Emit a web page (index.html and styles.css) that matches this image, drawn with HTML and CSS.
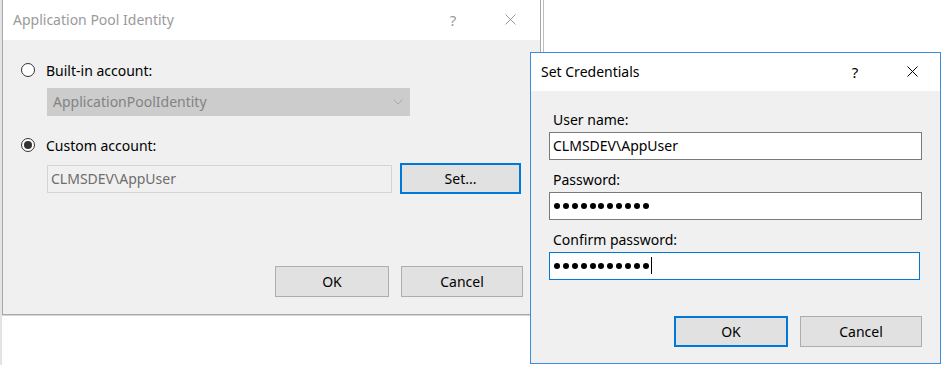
FILE: index.html
```html
<!DOCTYPE html>
<html>
<head>
<meta charset="utf-8">
<title>Application Pool Identity</title>
<link rel="stylesheet" href="styles.css">
</head>
<body>
<div class="desktop">
  <section class="dialog dialog-pool">
    <header class="titlebar inactive">
      <span class="title">Application Pool Identity</span>
      <span class="help">?</span>
      <svg class="close" width="11" height="11" viewBox="0 0 11 11"><path d="M0.5 0.5L10.5 10.5M10.5 0.5L0.5 10.5"/></svg>
    </header>
    <div class="pane pool-pane">
      <div class="radio-row">
        <span class="radio"></span><span class="label">Built-in account:</span>
      </div>
      <div class="combo">
        <span>ApplicationPoolIdentity</span>
        <svg class="chevron" width="10" height="6" viewBox="0 0 10 6"><path d="M0.5 0.5L5 5L9.5 0.5"/></svg>
      </div>
      <div class="radio-row second">
        <span class="radio checked"></span><span class="label">Custom account:</span>
      </div>
      <div class="account-row">
        <div class="textbox disabled">CLMSDEV\AppUser</div>
        <button class="btn default set">Set...</button>
      </div>
      <div class="actions pool-actions">
        <button class="btn ok">OK</button>
        <button class="btn cancel">Cancel</button>
      </div>
    </div>
  </section>

  <section class="dialog dialog-cred">
    <header class="titlebar">
      <span class="title">Set Credentials</span>
      <span class="help">?</span>
      <svg class="close" width="11" height="11" viewBox="0 0 11 11"><path d="M0.5 0.5L10.5 10.5M10.5 0.5L0.5 10.5"/></svg>
    </header>
    <div class="pane cred-pane">
      <div class="field-label first">User name:</div>
      <div class="textbox field">CLMSDEV\AppUser</div>
      <div class="field-label">Password:</div>
      <div class="textbox field dots"><i></i><i></i><i></i><i></i><i></i><i></i><i></i><i></i><i></i><i></i><i></i></div>
      <div class="field-label">Confirm password:</div>
      <div class="textbox field dots focused"><i></i><i></i><i></i><i></i><i></i><i></i><i></i><i></i><i></i><i></i><i></i><span class="caret"></span></div>
      <div class="actions cred-actions">
        <button class="btn default ok">OK</button>
        <button class="btn cancel">Cancel</button>
      </div>
    </div>
  </section>
</div>
</body>
</html>
```

FILE: styles.css
```css
* { box-sizing: border-box; }

html, body {
  margin: 0;
  padding: 0;
  background: #ffffff;
  width: 942px;
  height: 365px;
  overflow: hidden;
}

body {
  font-family: "Noto Sans", "Open Sans", sans-serif;
  font-size: 14px;
  color: #000000;
}

.desktop {
  position: relative;
  width: 942px;
  height: 365px;
  border-left: 2px solid #e4e4e4;
}

.dialog {
  position: absolute;
  display: flex;
  flex-direction: column;
  background: #f0f0f0;
}

.dialog-pool {
  left: 0;
  top: 0;
  width: 539px;
  height: 315px;
  border: 1px solid #a8a8a8;
  border-top: none;
  box-shadow: 2px 0 0 #ffffff, 3px 0 0 #bdbdbd, 0 1px 0 #d6d6d6;
}

.dialog-cred {
  left: 528px;
  top: 52px;
  width: 411px;
  height: 312px;
  border: 1px solid #3a8ddb;
}

.titlebar {
  display: flex;
  align-items: center;
  background: #ffffff;
  flex: none;
}

.dialog-pool .titlebar {
  height: 40px;
  padding: 0 24px 1px 10px;
}

.dialog-cred .titlebar {
  height: 38px;
  padding: 0 22px 1px 10px;
}

.title {
  flex: 1;
  font-size: 14px;
  white-space: nowrap;
}

.help {
  width: 20px;
  text-align: center;
  margin-right: 42px;
  font-size: 15px;
}

.close {
  display: block;
  fill: none;
  stroke: #000000;
  stroke-width: 1;
}

.inactive .title,
.inactive .help {
  color: #9a9a9a;
}

.inactive .close {
  stroke: #9a9a9a;
}

.pane {
  flex: 1;
  display: flex;
  flex-direction: column;
}

.pool-pane {
  padding: 20px 18px 0 18px;
}

.radio-row {
  display: flex;
  align-items: center;
  height: 20px;
  gap: 11px;
}

.radio-row.second {
  margin-top: 19px;
}

.radio {
  width: 14px;
  height: 14px;
  border: 1px solid #333333;
  border-radius: 50%;
  background: #ffffff;
  display: flex;
  align-items: center;
  justify-content: center;
  flex: none;
}

.radio.checked::after {
  content: "";
  width: 8px;
  height: 8px;
  border-radius: 50%;
  background: #333333;
}

.combo {
  margin: 8px 0 0 26px;
  width: 363px;
  height: 28px;
  background: #cccccc;
  border: 1px solid #cccccc;
  color: #838383;
  display: flex;
  align-items: center;
  justify-content: space-between;
  padding: 0 5px 1px 5px;
}

.chevron {
  fill: none;
  stroke: #a8a8a8;
  stroke-width: 1;
  margin-right: 1px;
}

.account-row {
  display: flex;
  align-items: center;
  margin: 8px 0 0 26px;
  gap: 8px;
}

.textbox {
  height: 28px;
  border: 1px solid #7a7a7a;
  background: #ffffff;
  display: flex;
  align-items: center;
  padding: 0 4px 1px 3px;
  white-space: nowrap;
}

.textbox.disabled {
  width: 345px;
  background: #f0f0f0;
  border-color: #d4d4d4;
  color: #6d6d6d;
}

.btn {
  font-family: inherit;
  font-size: 14px;
  color: #000000;
  height: 31px;
  background: #e1e1e1;
  border: 1px solid #adadad;
  padding: 0 0 1px 0;
  margin: 0;
}

.btn.default {
  border: 2px solid #0078d7;
}

.set {
  width: 121px;
}

.ok {
  width: 114px;
}

.cancel {
  width: 122px;
}

.actions {
  display: flex;
  justify-content: flex-end;
  gap: 12px;
}

.pool-actions {
  margin-top: 72px;
  padding-right: 0;
  margin-right: -1px;
}

.cred-pane {
  padding: 20px 18px 0 18px;
}

.field-label {
  height: 18px;
  line-height: 18px;
  padding-left: 4px;
  margin-top: 11px;
}

.field-label.first {
  margin-top: 0;
}

.field {
  width: 373px;
  margin-top: 3px;
}

.dots {
  gap: 2.9px;
  padding-left: 4px;
}

.dots i {
  display: block;
  width: 6px;
  height: 6px;
  border-radius: 50%;
  background: #000000;
  flex: none;
}

.focused {
  border-color: #0078d7;
  width: 371px;
}

.caret {
  display: block;
  width: 1px;
  height: 17px;
  background: #000000;
  margin-left: -1px;
}

.cred-actions {
  margin-top: 36px;
}
```
